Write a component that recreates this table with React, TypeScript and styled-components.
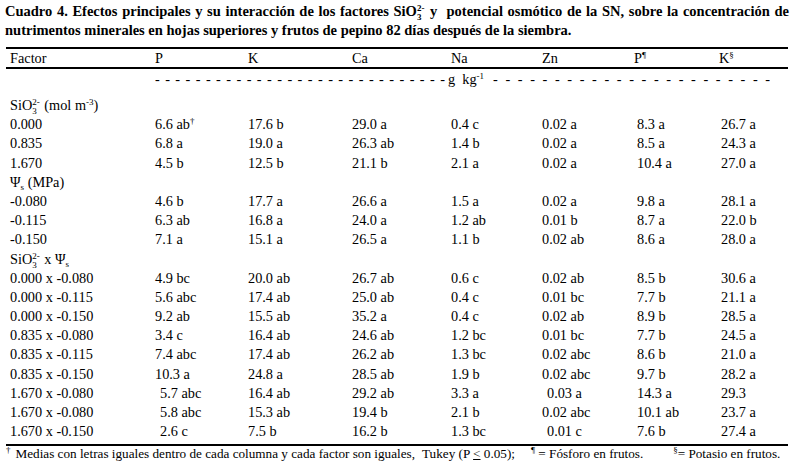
import React from "react";
import styled, { createGlobalStyle } from "styled-components";

const Global = createGlobalStyle`
  html, body { margin: 0; padding: 0; background: #fff; }
  body { font-family: "Liberation Serif", "Times New Roman", serif; color: #000; }
`;

const Page = styled.div`
  width: 794px;
  height: 462px;
  box-sizing: border-box;
  padding: 3px 5px 0 5px;
  overflow: hidden;
`;

const Caption = styled.div`
  font-weight: bold;
  font-size: 14.5px;
  line-height: 17px;
  width: 784px;
`;

const CaptionLine = styled.div<{ $justify?: boolean }>`
  text-align: ${(p) => (p.$justify ? "justify" : "left")};
  text-align-last: ${(p) => (p.$justify ? "justify" : "auto")};
`;

const Table = styled.div`
  margin: 8px 0 0 1px;
  width: 782px;
  font-size: 14.3px;
`;

const Row = styled.div<{ $h?: number }>`
  display: grid;
  grid-template-columns: 145px 93px 104px 99px 91px 95px 84px 1fr;
  padding-left: 4px;
  height: ${(p) => p.$h ?? 19.2}px;
  line-height: ${(p) => p.$h ?? 19.2}px;
  align-items: center;
  white-space: nowrap;
`;

const HeadRow = styled(Row)`
  border-top: 2px solid #000;
  border-bottom: 2px solid #000;
`;

const Cell = styled.div<{ $indent?: number; $span?: boolean }>`
  padding-left: ${(p) => Math.max(p.$indent ?? 0, 0)}px;
  margin-left: ${(p) => Math.min(p.$indent ?? 0, 0)}px;
  grid-column: ${(p) => (p.$span ? "1 / -1" : "auto")};
`;

const UnitRow = styled.div`
  display: flex;
  align-items: center;
  height: 20px;
  padding-left: 149px;
  white-space: nowrap;
`;

const DashRun = styled.span<{ $w: number }>`
  display: inline-block;
  width: ${(p) => p.$w}px;
  text-align: justify;
  text-align-last: justify;
  white-space: normal;
  height: 20px;
  line-height: 20px;
  overflow: hidden;
`;

const Unit = styled.span`
  margin: 0 9px 0 3px;
`;

const Body = styled.div`
  margin-top: 7px;
`;

const BottomRule = styled.div`
  margin-top: 3px;
  border-top: 2px solid #000;
`;

const Footnote = styled.div`
  font-size: 13.2px;
  line-height: 16px;
  white-space: nowrap;
`;

const Gap = styled.span<{ $w: number }>`
  display: inline-block;
  width: ${(p) => p.$w}px;
`;

const Sup = styled.sup<{ $gap?: number }>`
  font-size: 9px;
  line-height: 0;
  vertical-align: 5px;
  margin-right: ${(p) => p.$gap ?? 0}px;
`;

const Sub = styled.sub`
  font-size: 9px;
  line-height: 0;
  vertical-align: -3px;
`;

const Stack = styled.span`
  display: inline-flex;
  flex-direction: column;
  font-size: 9px;
  line-height: 9px;
  vertical-align: 5px;
  margin-right: 1px;
`;

const Under = styled.span`
  text-decoration: underline;
`;

const SiO = () => (
  <>
    SiO
    <Stack>
      <span>2-</span>
      <span>3</span>
    </Stack>
  </>
);

const Psi = () => (
  <>
    Ψ<Sub>s</Sub>
  </>
);

type DataRow = { label: string; cells: string[] };

const renderCell = (v: string, i: number) => {
  let indent = 0;
  let text = v;
  if (text.startsWith(">")) {
    indent = 5;
    text = text.slice(1);
  }
  let mark: string | null = null;
  if (text.endsWith("†")) {
    mark = "†";
    text = text.slice(0, -1);
  }
  return (
    <Cell key={i} $indent={indent}>
      {text}
      {mark && <Sup>{mark}</Sup>}
    </Cell>
  );
};

const siRows: DataRow[] = [
  { label: "0.000", cells: ["6.6 ab†", "17.6 b", "29.0 a", "0.4 c", "0.02 a", "8.3 a", "26.7 a"] },
  { label: "0.835", cells: ["6.8 a", "19.0 a", "26.3 ab", "1.4 b", "0.02 a", "8.5 a", "24.3 a"] },
  { label: "1.670", cells: ["4.5 b", "12.5 b", "21.1 b", "2.1 a", "0.02 a", "10.4 a", "27.0 a"] },
];

const psiRows: DataRow[] = [
  { label: "-0.080", cells: ["4.6 b", "17.7 a", "26.6 a", "1.5 a", "0.02 a", "9.8 a", "28.1 a"] },
  { label: "-0.115", cells: ["6.3 ab", "16.8 a", "24.0 a", "1.2 ab", "0.01 b", "8.7 a", "22.0 b"] },
  { label: "-0.150", cells: ["7.1 a", "15.1 a", "26.5 a", "1.1 b", "0.02 ab", "8.6 a", "28.0 a"] },
];

const mixRows: DataRow[] = [
  { label: "0.000 x -0.080", cells: ["4.9 bc", "20.0 ab", "26.7 ab", "0.6 c", "0.02 ab", "8.5 b", "30.6 a"] },
  { label: "0.000 x -0.115", cells: ["5.6 abc", "17.4 ab", "25.0 ab", "0.4 c", "0.01 bc", "7.7 b", "21.1 a"] },
  { label: "0.000 x -0.150", cells: ["9.2 ab", "15.5 ab", "35.2 a", "0.4 c", "0.02 ab", "8.9 b", "28.5 a"] },
  { label: "0.835 x -0.080", cells: ["3.4 c", "16.4 ab", "24.6 ab", "1.2 bc", "0.01 bc", "7.7 b", "24.5 a"] },
  { label: "0.835 x -0.115", cells: ["7.4 abc", "17.4 ab", "26.2 ab", "1.3 bc", "0.02 abc", "8.6 b", "21.0 a"] },
  { label: "0.835 x -0.150", cells: ["10.3 a", "24.8 a", "28.5 ab", "1.9 b", "0.02 abc", "9.7 b", "28.2 a"] },
  { label: "1.670 x -0.080", cells: [">5.7 abc", "16.4 ab", "29.2 ab", "3.3 a", ">0.03 a", "14.3 a", "29.3"] },
  { label: "1.670 x -0.080", cells: [">5.8 abc", "15.3 ab", "19.4 b", "2.1 b", "0.02 abc", "10.1 ab", "23.7 a"] },
  { label: "1.670 x -0.150", cells: [">2.6 c", "7.5 b", "16.2 b", "1.3 bc", ">0.01 c", "7.6 b", "27.4 a"] },
];

const DataRows = ({ rows }: { rows: DataRow[] }) => (
  <>
    {rows.map((r, idx) => (
      <Row key={idx}>
        <Cell>{r.label}</Cell>
        {r.cells.map(renderCell)}
      </Row>
    ))}
  </>
);

const dashes = (n: number) => Array.from({ length: n }, () => "-").join(" ");

export default function App() {
  return (
    <Page>
      <Global />
      <Caption>
        <CaptionLine $justify>
          Cuadro 4. Efectos principales y su interacción de los factores <SiO /> y&nbsp; potencial osmótico de la SN,
          sobre la concentración de
        </CaptionLine>
        <CaptionLine>
          nutrimentos minerales en hojas superiores y frutos de pepino 82 días después de la siembra.
        </CaptionLine>
      </Caption>
      <Table>
        <HeadRow $h={18}>
          <Cell>Factor</Cell>
          <Cell>P</Cell>
          <Cell>K</Cell>
          <Cell>Ca</Cell>
          <Cell>Na</Cell>
          <Cell>Zn</Cell>
          <Cell $indent={-3}>
            P<Sup>¶</Sup>
          </Cell>
          <Cell $indent={-2}>
            K<Sup>§</Sup>
          </Cell>
        </HeadRow>
        <UnitRow>
          <DashRun $w={290}>{dashes(29)}</DashRun>
          <Unit>
            g&nbsp; kg<Sup>-1</Sup>
          </Unit>
          <DashRun $w={277}>{dashes(23)}</DashRun>
        </UnitRow>
        <Body>
          <Row>
            <Cell $span>
              <SiO /> (mol m<Sup>-3</Sup>)
            </Cell>
          </Row>
          <DataRows rows={siRows} />
          <Row>
            <Cell $span>
              <Psi /> (MPa)
            </Cell>
          </Row>
          <DataRows rows={psiRows} />
          <Row>
            <Cell $span>
              <SiO /> x <Psi />
            </Cell>
          </Row>
          <DataRows rows={mixRows} />
        </Body>
        <BottomRule />
        <Footnote>
          <Sup $gap={5}>†</Sup>Medias con letras iguales dentro de cada columna y cada factor son iguales,
          <Gap $w={7} />
          Tukey (P <Under>&lt;</Under> 0.05);
          <Gap $w={16} />
          <Sup>¶</Sup> = Fósforo en frutos.
          <Gap $w={30} />
          <Sup>§</Sup>= Potasio en frutos.
        </Footnote>
      </Table>
    </Page>
  );
}
